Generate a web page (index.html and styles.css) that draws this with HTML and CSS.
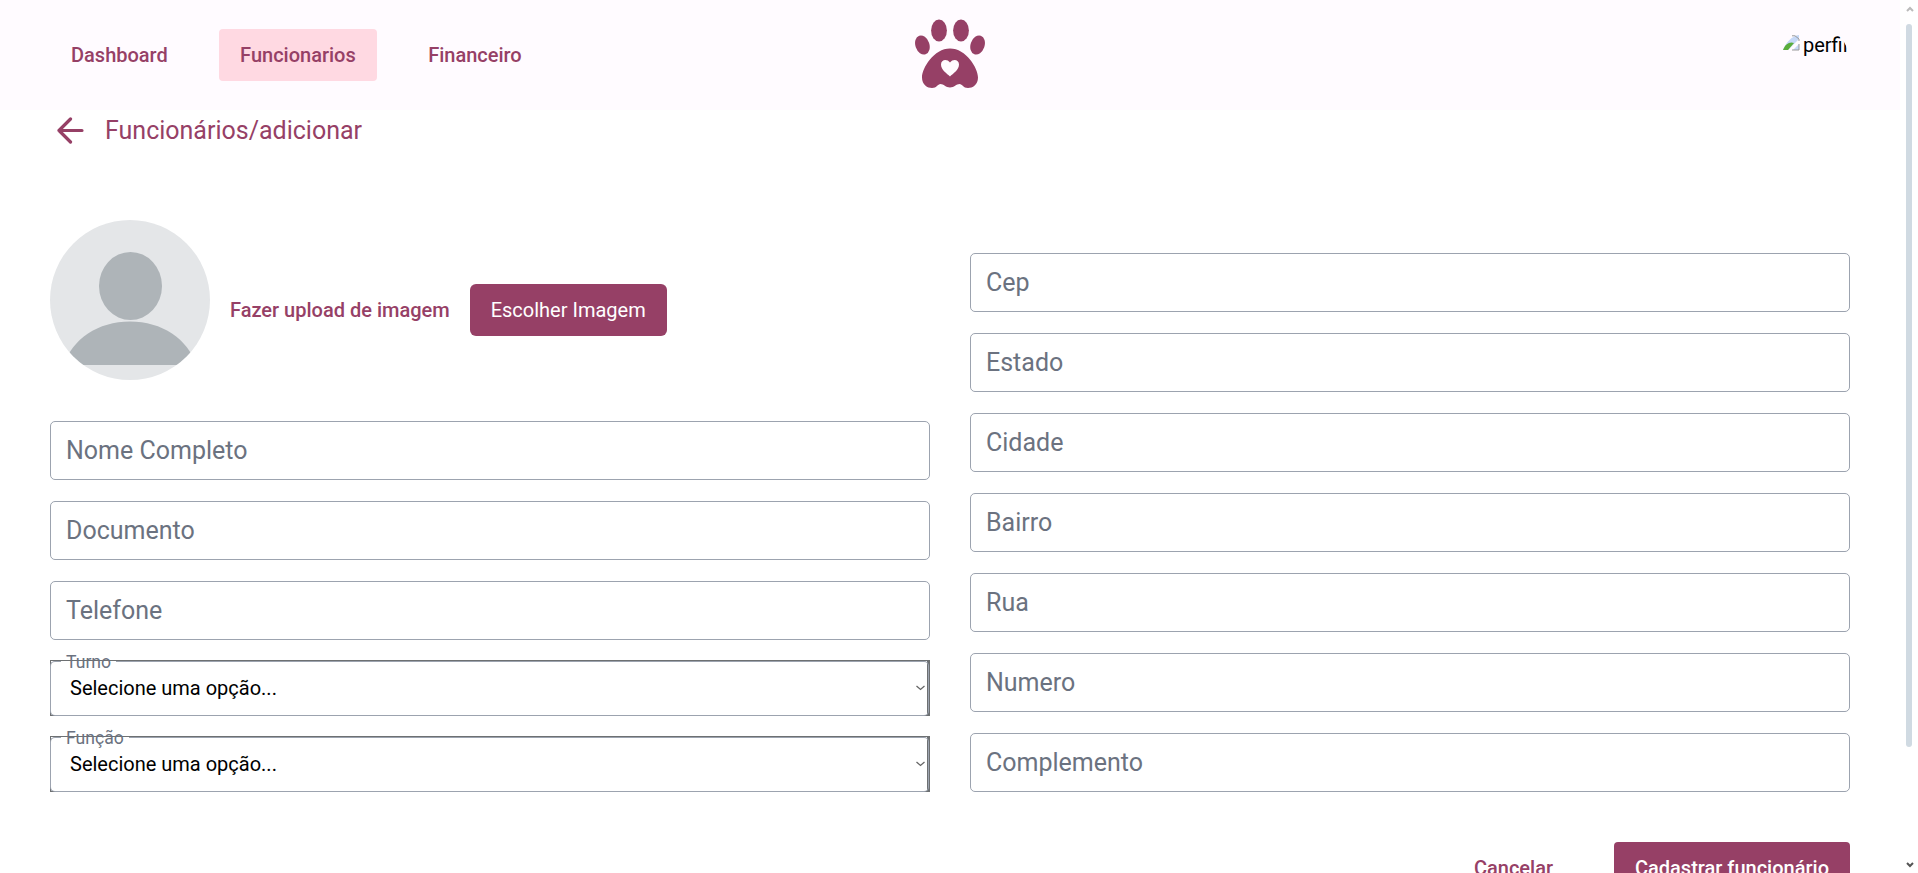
FILE: index.html
```html
<!DOCTYPE html>
<html lang="pt-BR">
<head>
<meta charset="utf-8">
<title>Funcionários</title>
<link rel="stylesheet" href="styles.css">
</head>
<body>
<div class="page">
  <header class="header">
    <nav class="nav">
      <a class="nav-link">Dashboard</a>
      <a class="nav-link active">Funcionarios</a>
      <a class="nav-link">Financeiro</a>
    </nav>
    <svg class="logo" width="70" height="69" viewBox="0 0 70 69">
      <g fill="#964066">
        <ellipse cx="24" cy="11.5" rx="7.9" ry="11"/>
        <ellipse cx="46" cy="11.5" rx="7.9" ry="11"/>
        <ellipse cx="7.4" cy="26" rx="7" ry="9.8" transform="rotate(-19 7.4 26)"/>
        <ellipse cx="62.6" cy="26" rx="7" ry="9.8" transform="rotate(19 62.6 26)"/>
        <path d="M35 29.500C51 29.500 63 49 63 58.500C63 66 57.500 69 53 69C48 69 47.500 65 44.500 65C41.500 65 39 68.500 35 68.500C31 68.500 28.500 65 25.500 65C22.500 65 22 69 17 69C12.500 69 7 66 7 58.500C7 49 19 29.500 35 29.500Z"/>
      </g>
      <path fill="#fffbff" d="M35 57.500C32 54.500 26 51 26 45.500C26 40.500 32 39.500 35 43.500C38 39.500 44 40.500 44 45.500C44 51 38 54.500 35 57.500Z"/>
    </svg>
    <div class="profile">
      <svg class="broken" width="18" height="16" viewBox="0 0 18 16">
        <path d="M0 15C3 7 9 1 16 0V4L5 15Z" fill="#c5d8f7"/>
        <path d="M0 15C2 9 7 6 11 8L5 15Z" fill="#5aad3c"/>
        <path d="M10 15L16 9V15Z" fill="#c5d8f7"/>
        <path d="M9 .8H12L16 4V6M16 9V15H9" fill="none" stroke="#999"/>
      </svg>
      <span class="profile-alt">perfil</span>
    </div>
  </header>

  <main class="main">
    <div class="crumb">
      <svg width="27" height="27" viewBox="0 0 27 27" fill="none" stroke="#964066" stroke-width="3.2" stroke-linecap="round" stroke-linejoin="round"><path d="M25 13.500H2M13.500 2L2 13.500L13.500 25"/></svg>
      <h1 class="title">Funcionários/adicionar</h1>
    </div>
    <form class="form">
      <div class="column">
        <div class="upload">
          <svg class="avatar" width="160" height="160" viewBox="0 0 160 160">
            <clipPath id="round"><circle cx="80" cy="80" r="80"/></clipPath>
            <g clip-path="url(#round)">
              <rect width="160" height="160" fill="#e4e6e8"/>
              <ellipse cx="80.500" cy="66" rx="31.500" ry="34" fill="#aeb4b8"/>
              <path d="M14 145C22 119 48 101.500 80 101.500S138 119 146 145Z" fill="#aeb4b8"/>
            </g>
          </svg>
          <span class="upload-label">Fazer upload de imagem</span>
          <span class="button choose">Escolher Imagem</span>
        </div>
        <div class="field">Nome Completo</div>
        <div class="field">Documento</div>
        <div class="field">Telefone</div>
        <div class="select turno">
          <div class="outline"><i class="start"></i><i class="notch">Turno</i><i class="end"></i></div>
          <span class="value">Selecione uma opção...</span>
          <svg class="chevron" width="9" height="6" viewBox="0 0 9 6"><path d="M.5 1L4.500 4.500L8.500 1" fill="none" stroke="#666" stroke-width="1.300"/></svg>
        </div>
        <div class="select funcao">
          <div class="outline"><i class="start"></i><i class="notch">Função</i><i class="end"></i></div>
          <span class="value">Selecione uma opção...</span>
          <svg class="chevron" width="9" height="6" viewBox="0 0 9 6"><path d="M.5 1L4.500 4.500L8.500 1" fill="none" stroke="#666" stroke-width="1.300"/></svg>
        </div>
      </div>
      <div class="column right">
        <div class="field">Cep</div>
        <div class="field">Estado</div>
        <div class="field">Cidade</div>
        <div class="field">Bairro</div>
        <div class="field">Rua</div>
        <div class="field">Numero</div>
        <div class="field">Complemento</div>
      </div>
    </form>
    <div class="actions">
      <span class="cancel">Cancelar</span>
      <span class="button submit">Cadastrar funcionário</span>
    </div>
  </main>
</div>
<div class="scrollbar">
  <svg width="8" height="6" viewBox="0 0 8 6"><path d="M1 5L4 2L7 5" fill="none" stroke="#bbb" stroke-width="2"/></svg>
  <div class="thumb"></div>
  <svg class="down" width="8" height="6" viewBox="0 0 8 6"><path d="M1 1L4 4L7 1" fill="none" stroke="#555" stroke-width="2"/></svg>
</div>
</body>
</html>
```
FILE: styles.css
```css
* { box-sizing: border-box; }
body {
  margin: 0;
  height: 873px;
  overflow: hidden;
  display: flex;
  background: #fff;
  font-family: Roboto, sans-serif;
  color: #964066;
}
.page { width: 1900px; height: 873px; overflow: hidden; }
.header {
  height: 110px;
  background: #fffbff;
  display: grid;
  grid-template-columns: 1fr 70px 1fr;
  align-items: center;
  padding: 0 50px;
}
.nav { display: flex; gap: 30px; }
.nav-link {
  height: 52px;
  padding: 0 21px;
  line-height: 52px;
  font-size: 20px;
  font-weight: 500;
  border-radius: 4px;
}
.nav-link:first-child { padding-right: 21.3px; }
.active { background: #ffd9e2; padding-right: 21.4px; }
.logo { display: block; margin-top: -3px; }
.profile {
  justify-self: end;
  align-self: start;
  width: 70px;
  height: 70px;
  margin: 25px 1px 0 0;
  padding: 8px 0 0 5px;
  border-radius: 50%;
  overflow: hidden;
  display: flex;
  color: #000;
}
.broken { flex: none; margin: 2px 2px 0 -1px; }
.profile-alt { font-size: 20px; line-height: 24px; }
.main { padding: 7px 50px 0; }
.crumb { height: 27px; display: flex; align-items: center; gap: 21px; padding-left: 7px; }
.title { margin: 0; font-size: 25px; line-height: 28px; font-weight: 400; }
.form { display: flex; gap: 40px; margin-top: 76px; }
.column { width: 880px; display: flex; flex-direction: column; }
.right { padding-top: 33px; }
.upload { height: 201px; display: flex; align-items: flex-start; gap: 20px; }
.avatar { flex: none; }
.upload-label { margin-top: 64px; height: 52px; line-height: 52px; font-size: 20px; font-weight: 500; }
.button { display: block; height: 52px; line-height: 52px; text-align: center; background: #964066; color: #fff; font-size: 20px; }
.choose { width: 197px; margin-top: 64px; border-radius: 6px; }
.field {
  height: 59px;
  margin-bottom: 21px;
  padding: 0 15px;
  border: 1px solid #9ca3af;
  border-radius: 5px;
  color: #6b7280;
  font-size: 25px;
  line-height: 58px;
}
.right .field:last-child { margin-bottom: 0; }
.select {
  position: relative;
  height: 56px;
  border: 1px solid #6d7072;
  border-width: 1px 3px 1px 1px;
  display: flex;
  align-items: center;
  justify-content: space-between;
  padding: 0 2px 0 19px;
  color: #000;
}
.turno { margin: -1px 0 20px; }
.value { font-size: 20px; line-height: 24px; }
.outline { position: absolute; inset: 0 -2px -1px -1px; display: flex; color: #6b7280; }
.start { width: 11px; border: 1px solid #9ca3af; border-right: 0; border-radius: 5px 0 0 5px; }
.notch { padding: 0 5px; border-bottom: 1px solid #9ca3af; font-style: normal; font-size: 17.6px; line-height: 22px; margin-top: -10px; }
.end { flex: 1; border: 1px solid #9ca3af; border-left: 0; border-radius: 0 5px 5px 0; }
.actions { height: 52px; margin-top: 50px; display: flex; justify-content: flex-end; gap: 61px; font-size: 20px; font-weight: 500; line-height: 52px; }
.submit { width: 236px; border-radius: 4px; }
.scrollbar { width: 18px; height: 873px; display: flex; flex-direction: column; align-items: flex-start; padding: 6px 0 0 6px; }
.thumb { width: 6px; height: 723px; margin-top: 12px; border-radius: 3px; background: #d0dae2; }
.down { margin-top: 115px; }
```
